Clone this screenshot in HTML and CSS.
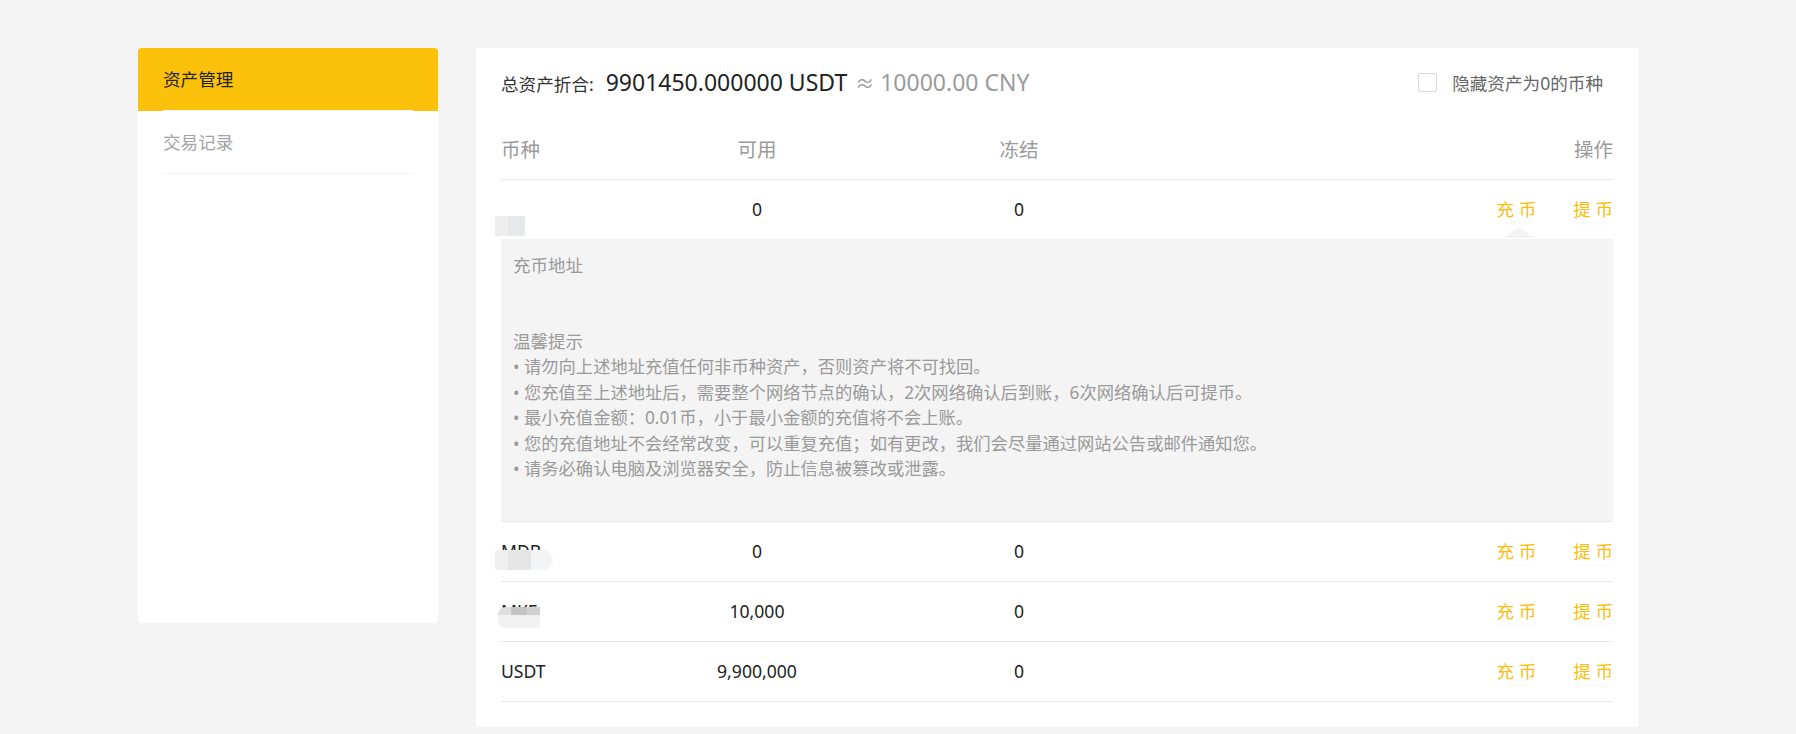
FILE: index.html
```html
<!DOCTYPE html>
<html lang="zh-CN">
<head>
<meta charset="utf-8">
<title>资产管理</title>
<link rel="stylesheet" href="styles.css">
</head>
<body>
<div class="page">
  <aside class="sidebar">
    <ul class="menu">
      <li class="menu-item active"><span class="menu-label">资产管理</span></li>
      <li class="menu-item"><span class="menu-label">交易记录</span></li>
    </ul>
  </aside>
  <main class="panel">
    <div class="summary">
      <div class="total">
        <span class="total-label">总资产折合:</span>
        <span class="total-usdt">9901450.000000 USDT</span>
        <span class="total-cny"><span class="approx">≈</span> 10000.00 CNY</span>
      </div>
      <label class="hide-zero"><span class="checkbox"></span><span>隐藏资产为0的币种</span></label>
    </div>
    <div class="table">
      <div class="row head">
        <div class="cell coin">币种</div>
        <div class="cell num">可用</div>
        <div class="cell num">冻结</div>
        <div class="cell ops">操作</div>
      </div>
      <div class="row open">
        <div class="cell coin"><span class="mask mask-a"></span></div>
        <div class="cell num">0</div>
        <div class="cell num">0</div>
        <div class="cell ops"><span class="action active">充 币</span><span class="action">提 币</span></div>
      </div>
      <div class="deposit">
        <div class="dep-label">充币地址</div>
        <div class="dep-address"></div>
        <div class="dep-title">温馨提示</div>
        <ul class="tips">
          <li>请勿向上述地址充值任何非币种资产，否则资产将不可找回。</li>
          <li>您充值至上述地址后，需要整个网络节点的确认，2次网络确认后到账，6次网络确认后可提币。</li>
          <li>最小充值金额：0.01币，小于最小金额的充值将不会上账。</li>
          <li>您的充值地址不会经常改变，可以重复充值；如有更改，我们会尽量通过网站公告或邮件通知您。</li>
          <li>请务必确认电脑及浏览器安全，防止信息被篡改或泄露。</li>
        </ul>
      </div>
      <div class="row">
        <div class="cell coin">MDB<span class="mask mask-b"></span></div>
        <div class="cell num">0</div>
        <div class="cell num">0</div>
        <div class="cell ops"><span class="action">充 币</span><span class="action">提 币</span></div>
      </div>
      <div class="row">
        <div class="cell coin">MKF<span class="mask mask-c"></span></div>
        <div class="cell num">10,000</div>
        <div class="cell num">0</div>
        <div class="cell ops"><span class="action">充 币</span><span class="action">提 币</span></div>
      </div>
      <div class="row">
        <div class="cell coin">USDT</div>
        <div class="cell num">9,900,000</div>
        <div class="cell num">0</div>
        <div class="cell ops"><span class="action">充 币</span><span class="action">提 币</span></div>
      </div>
    </div>
  </main>
</div>
</body>
</html>
```
FILE: styles.css
```css
* { box-sizing: border-box; }

html, body {
  margin: 0;
  padding: 0;
  background: #f4f4f4;
  font-family: "Noto Sans", "Noto Sans CJK SC", sans-serif;
  font-size: 17.6px;
  color: #333;
}

.page {
  display: flex;
  align-items: flex-start;
  gap: 38px;
  padding: 48px 0 0 138px;
}

/* sidebar */
.sidebar {
  width: 300px;
  height: 575px;
  background: #fff;
  border-radius: 4px;
  overflow: hidden;
  flex: none;
}

.menu {
  list-style: none;
  margin: 0;
  padding: 0;
}

.menu-item {
  padding: 0 25px;
}

.menu-item.active {
  background: #fcc10a;
}

.menu-label {
  display: block;
  height: 63px;
  line-height: 62px;
  border-bottom: 1px solid #f1f1f1;
  color: #a3a3a3;
  font-size: 17.6px;
}

.menu-item.active .menu-label {
  color: #222;
  border-bottom-color: #fafafa;
}

/* panel */
.panel {
  width: 1162px;
  flex: none;
  background: #fff;
  padding: 0 25px 25px;
}

.summary {
  height: 71px;
  padding-bottom: 3px;
  display: flex;
  align-items: center;
  justify-content: space-between;
}

.total {
  display: flex;
  align-items: baseline;
  white-space: nowrap;
}

.total-label {
  font-size: 17.6px;
  color: #333;
}

.total-usdt {
  font-size: 23px;
  color: #222;
  margin-left: 12px;
}

.total-cny {
  font-size: 23px;
  color: #9b9b9b;
  margin-left: 8px;
}

.approx {
  font-size: 19px;
}

.hide-zero {
  display: flex;
  align-items: center;
  gap: 15px;
  margin-right: 10px;
  color: #666;
  font-size: 17.6px;
}

.checkbox {
  width: 19px;
  height: 19px;
  border: 1px solid #d9d9d9;
  border-radius: 2px;
  background: #fff;
}

/* table */
.row {
  display: grid;
  grid-template-columns: 176px 160px 364px 1fr;
  align-items: center;
  height: 60px;
  border-bottom: 1px solid #e8e8e8;
  font-size: 17.6px;
  color: #222;
}

.row.head {
  height: 61px;
  font-size: 19.5px;
  color: #9a9a9a;
}

.row.open {
  height: 59px;
  border-bottom: none;
}

.cell {
  line-height: 25px;
  white-space: nowrap;
}

.coin {
  position: relative;
}

.num {
  text-align: center;
}

.ops {
  display: flex;
  justify-content: flex-end;
  gap: 37px;
}

.action {
  position: relative;
  color: #fcbd0a;
  box-shadow: 0 4px 4px -3px rgba(0, 0, 0, 0.035);
  border-radius: 4px;
}

.action.active::after {
  content: "";
  position: absolute;
  left: calc(50% + 3px);
  top: calc(100% + 5px);
  transform: translateX(-50%);
  border-left: 15px solid transparent;
  border-right: 15px solid transparent;
  border-bottom: 11px solid #f4f4f4;
}

/* blurred coin names */
.mask {
  position: absolute;
  display: block;
}

.mask-a {
  left: -6px;
  top: 6px;
  width: 30px;
  height: 20px;
  background: linear-gradient(90deg, #eeeeee 0 45%, #e7e8ea 45% 100%);
}

.mask-b {
  left: -6px;
  top: 11px;
  width: 58px;
  height: 20px;
  border-radius: 3px 10px 10px 3px;
  background: linear-gradient(90deg, #efefef 0 22%, #e6e6e7 22% 62%, #f3f4f6 62% 100%);
}

.mask-c {
  left: -3px;
  top: 8px;
  width: 42px;
  height: 21px;
  border-radius: 8px 0 0 8px;
  background:
    linear-gradient(180deg, rgba(0,0,0,0) 0 40%, #f1f1f1 40% 100%),
    linear-gradient(90deg, #dedede 0 30%, #c4c4c4 30% 70%, #d0d0d0 70% 100%);
}

/* deposit panel */
.deposit {
  background: #f4f4f4;
  padding: 14px 12px 39px;
  border-bottom: 1px solid #e8e8e8;
  color: #9a9a9a;
  font-size: 17.3px;
  line-height: 25.5px;
}

.dep-label,
.dep-title {
  font-size: 17.5px;
}

.dep-address {
  height: 50px;
}

.tips {
  list-style: none;
  margin: 0;
  padding: 0;
}

.tips li::before {
  content: "•";
  display: inline-block;
  width: 11px;
}
```
